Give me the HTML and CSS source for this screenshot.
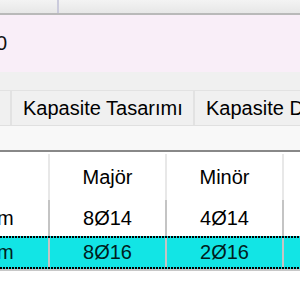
FILE: index.html
```html
<!DOCTYPE html>
<html>
<head>
<meta charset="utf-8">
<link rel="stylesheet" href="styles.css">
</head>
<body>
<div class="app">
  <div class="toolbar">
    <div class="tb-sep"></div>
  </div>
  <div class="pink">
    <span class="pink-text">0</span>
  </div>
  <div class="gap"></div>
  <div class="tabs">
    <div class="tab tab-first"></div>
    <div class="tab tab-mid">Kapasite Tasarımı</div>
    <div class="tab tab-last">Kapasite Donatısı</div>
  </div>
  <div class="tabbody"></div>
  <div class="grid">
    <div class="row row-head">
      <div class="cell c0"></div>
      <div class="cell c1">Majör</div>
      <div class="cell c2">Minör</div>
      <div class="cell c3"></div>
    </div>
    <div class="row row-data">
      <div class="cell c0"><span class="cut">m</span></div>
      <div class="cell c1">8Ø14</div>
      <div class="cell c2">4Ø14</div>
      <div class="cell c3"></div>
    </div>
    <div class="row row-sel">
      <div class="cell c0"><span class="cut">m</span></div>
      <div class="cell c1">8Ø16</div>
      <div class="cell c2">2Ø16</div>
      <div class="cell c3"></div>
    </div>
    <div class="grid-rest"></div>
  </div>
</div>
</body>
</html>
```

FILE: styles.css
```css
html, body {
  margin: 0;
  padding: 0;
  background: #ffffff;
}
.app {
  width: 300px;
  height: 300px;
  overflow: hidden;
  font-family: "Liberation Sans", Arial, sans-serif;
  font-size: 20px;
  color: #000;
  display: flex;
  flex-direction: column;
}
.toolbar {
  height: 13px;
  flex: none;
  background: linear-gradient(#f3f3f3, #e7e7e7);
  border-bottom: 2px solid #b9b9b9;
  display: flex;
}
.tb-sep {
  margin-left: 57px;
  width: 2px;
  background: #cbcbdc;
}
.pink {
  height: 57px;
  flex: none;
  background: #f9eef8;
  display: flex;
  align-items: center;
  overflow: hidden;
}
.pink-text {
  margin-left: -4px;
  color: #111;
}
.gap {
  height: 18px;
  flex: none;
  background: #f0f0f0;
}
.tabs {
  height: 35px;
  flex: none;
  display: flex;
  background: #f0f0f0;
  white-space: nowrap;
}
.tab {
  flex: none;
  display: flex;
  align-items: center;
  border-right: 2px solid #e2e2e2;
  border-top: 1px solid #e2e2e2;
  background: #f0f0f0;
  color: #000;
}
.tab-first {
  width: 10px;
}
.tab-mid {
  padding: 0 10px 0 11px;
  width: 160px;
}
.tab-last {
  padding-left: 11px;
  border-right: none;
}
.tabbody {
  height: 24px;
  flex: none;
  background: #f8f8f8;
  border-top: 1px solid #e0e0e0;
}
.grid {
  flex: 1;
  background: #fff;
  border-top: 2px solid #888888;
  display: flex;
  flex-direction: column;
}
.row {
  display: flex;
  flex: none;
}
.cell {
  flex: none;
  display: flex;
  align-items: center;
  justify-content: center;
  border-right: 2px solid #c4c4c4;
  overflow: hidden;
  white-space: nowrap;
}
.c0 { width: 48px; justify-content: flex-start; }
.c1 { width: 115px; }
.c2 { width: 115px; }
.c3 { flex: 1; border-right: none; }
.row-head {
  height: 46px;
  padding-top: 2px;
}
.row-head .cell {
  border-right-color: #e8e8e8;
}
.row-head .c3 { border-right: none; }
.row-data {
  height: 36px;
}
.row-sel {
  height: 29px;
  background: #12e5e5;
  border-top: 2px solid transparent;
  border-bottom: 2px solid transparent;
  background-image:
    repeating-linear-gradient(90deg, #000 0 2px, transparent 2px 3px),
    repeating-linear-gradient(90deg, #000 0 2px, transparent 2px 3px);
  background-size: 100% 2px, 100% 2px;
  background-position: 0 0, 0 100%;
  background-repeat: no-repeat;
  background-origin: border-box;
  background-clip: border-box;
}
.row-sel .cell {
  color: #002020;
}
.cut {
  margin-left: -3px;
}
.grid-rest {
  border-top: 2px solid #c8c8c8;
  flex: 1;
}
```
